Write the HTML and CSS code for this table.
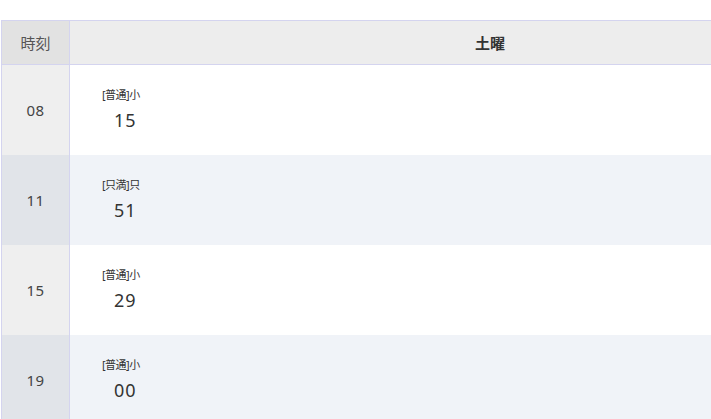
FILE: index.html
```html
<!DOCTYPE html>
<html lang="ja">
<head>
   <meta charset="UTF-8">
   <title>時刻表</title>
   <link rel="stylesheet" href="styles.css">
</head>
<body>
   <table class="timetable">
      <thead>
         <tr>
            <th class="hour-head">時刻</th>
            <th class="day-head">土曜</th>
         </tr>
      </thead>
      <tbody>
         <tr>
            <td class="hour">08</td>
            <td class="trains">
               <div class="train">
                  <span class="kind">[普通]小</span>
                  <span class="minute">15</span>
               </div>
            </td>
         </tr>
         <tr class="alt">
            <td class="hour">11</td>
            <td class="trains">
               <div class="train">
                  <span class="kind">[只満]只</span>
                  <span class="minute">51</span>
               </div>
            </td>
         </tr>
         <tr>
            <td class="hour">15</td>
            <td class="trains">
               <div class="train">
                  <span class="kind">[普通]小</span>
                  <span class="minute">29</span>
               </div>
            </td>
         </tr>
         <tr class="alt">
            <td class="hour">19</td>
            <td class="trains">
               <div class="train">
                  <span class="kind">[普通]小</span>
                  <span class="minute">00</span>
               </div>
            </td>
         </tr>
      </tbody>
   </table>
</body>
</html>
```

FILE: styles.css
```css
:root {
   --line: #d4d4ef;
   --head-bg: #ededed;
   --hour-head-bg: #e2e2e2;
   --hour-bg: #efefef;
   --alt-bg: #f0f3f8;
   --alt-hour-bg: #e1e4e9;
}
* {
   font-family: "Noto Sans", "Noto Sans CJK JP", sans-serif;
}
body {
   margin: 20px 0 0 1px;
   color: #333;
}
.timetable {
   width: 910px;
   border-collapse: collapse;
}
th, td {
   border: 1px solid var(--line);
   padding: 0;
}
thead th {
   height: 43px;
   background: var(--head-bg);
   font-size: 15px;
}
.hour-head {
   width: 67px;
   background: var(--hour-head-bg);
   font-weight: normal;
   color: #555;
}
.day-head {
   font-weight: bold;
}
tbody td {
   height: 90px;
}
.hour {
   text-align: center;
   font-size: 15px;
   letter-spacing: 0.5px;
   color: #444;
   background: var(--hour-bg);
   border-top: none;
   border-bottom: none;
}
.trains {
   background: #fff;
   border-right: none;
   border-top: none;
   border-bottom: none;
   padding-left: 32px;
}
.alt .trains {
   background: var(--alt-bg);
}
.alt .hour {
   background: var(--alt-hour-bg);
}
.train {
   display: flex;
   flex-direction: column;
   align-items: flex-start;
}
.kind {
   font-size: 11px;
   line-height: 16px;
   letter-spacing: -0.5px;
}
.minute {
   font-size: 18px;
   letter-spacing: 1px;
   line-height: 26px;
   margin-top: 4px;
   margin-left: 12px;
}
```
